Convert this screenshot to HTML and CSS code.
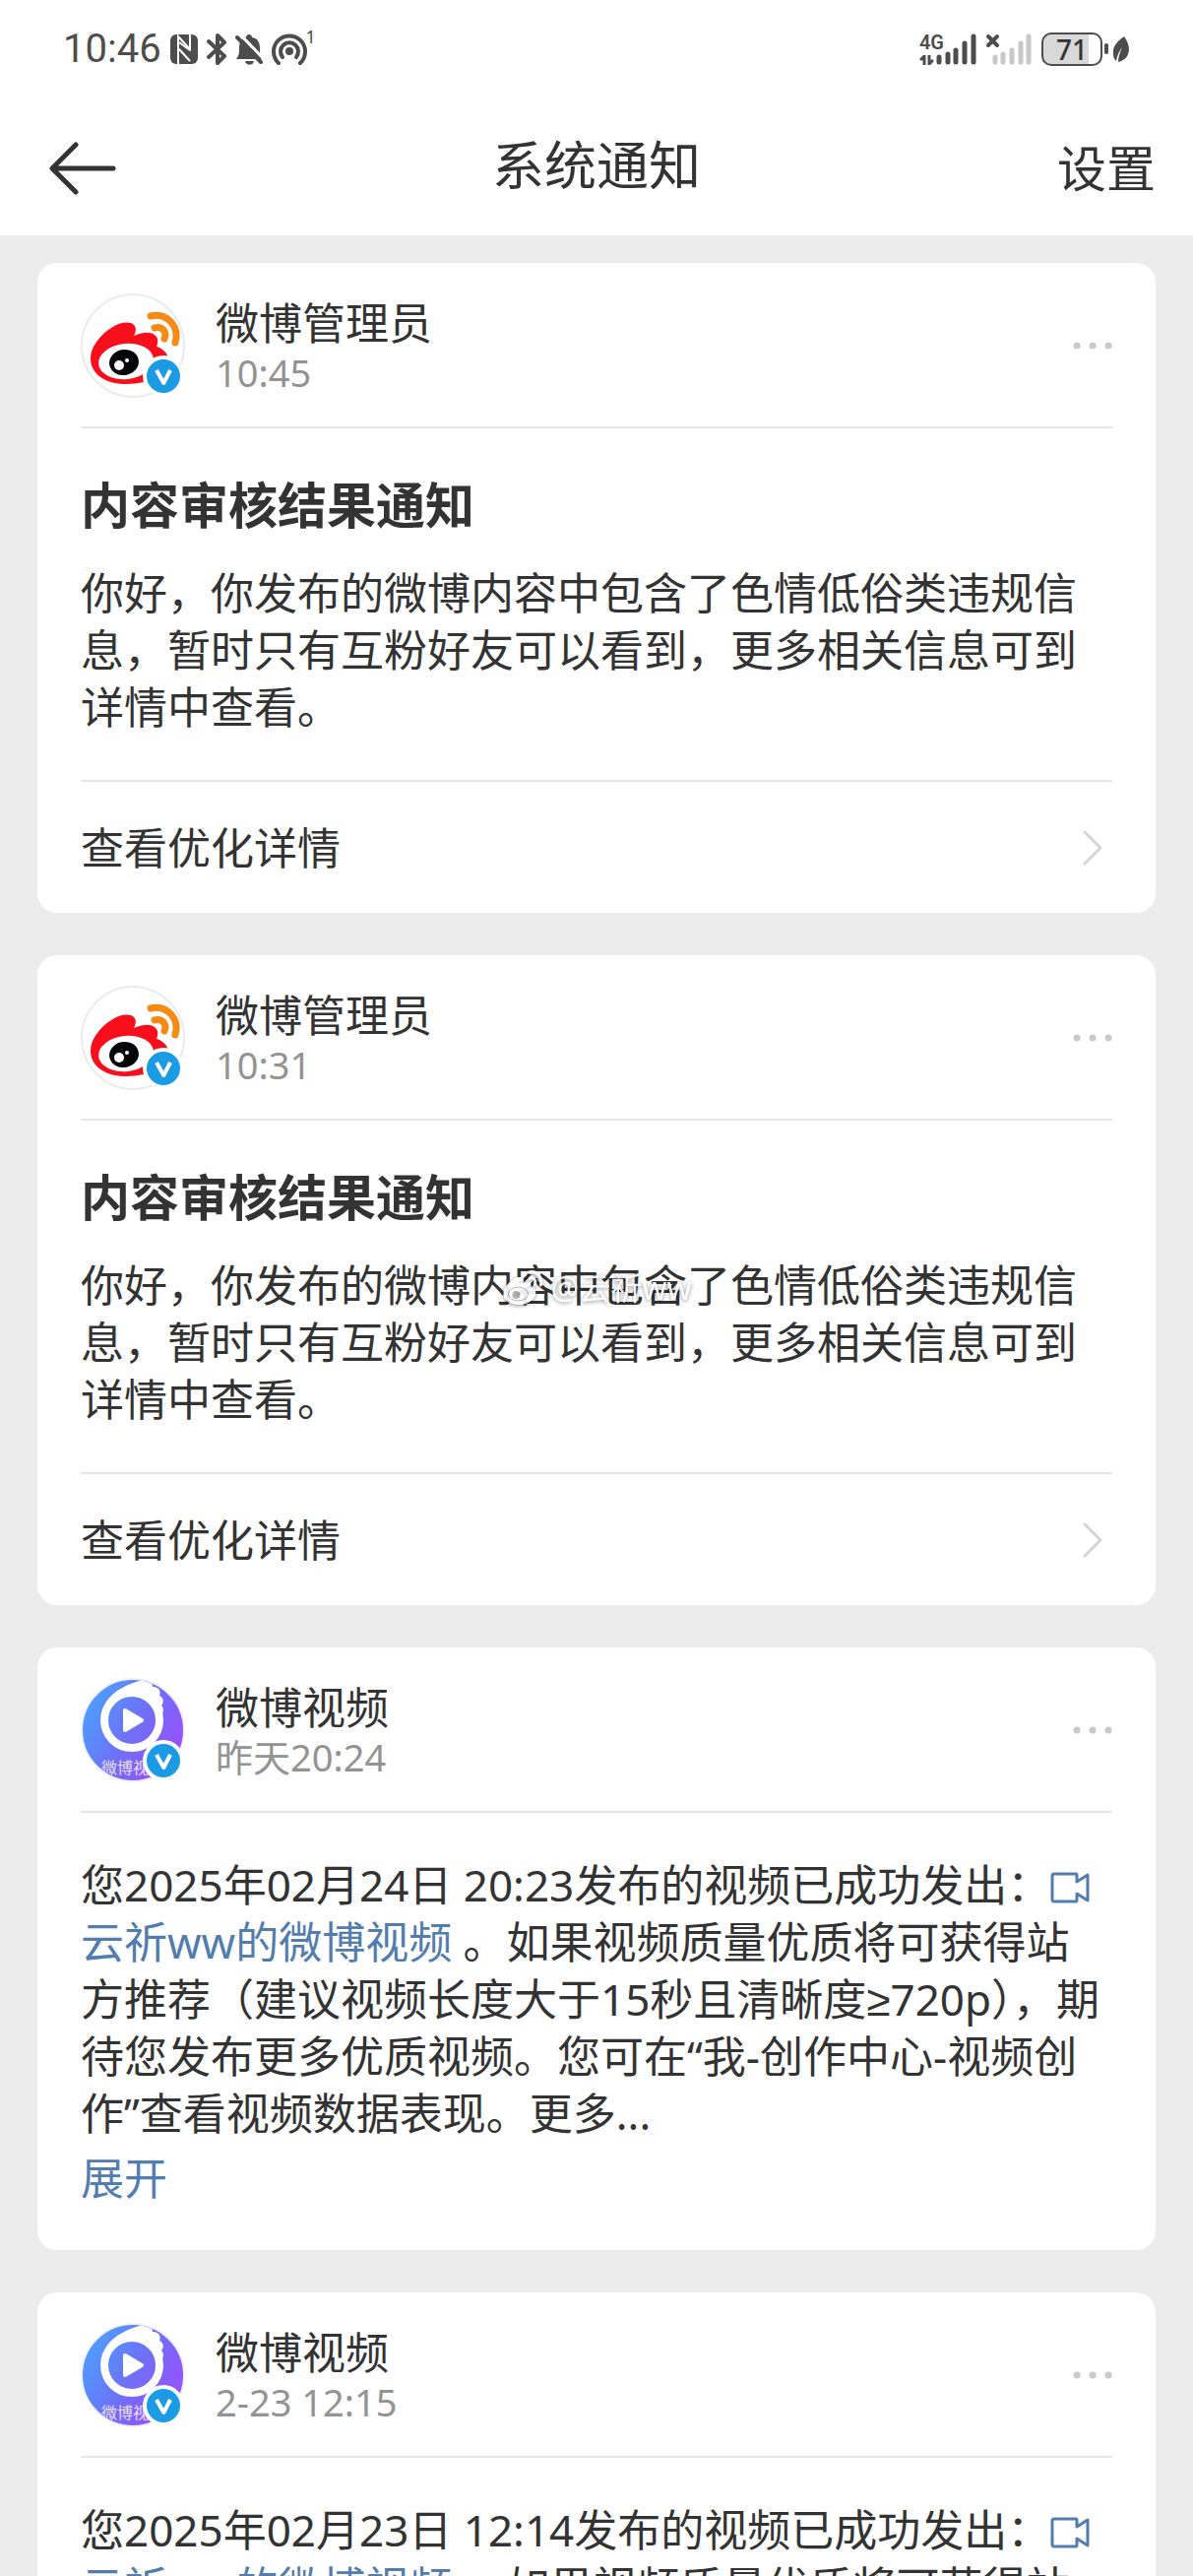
FILE: index.html
```
<!DOCTYPE html>
<html lang="zh-CN">

<head>
  <meta charset="UTF-8" />
  <meta name="viewport" content="width=device-width, initial-scale=1.0" />
  <title>系统通知</title>
  <link rel="stylesheet" href="styles.css">
</head>

<body>
  <!-- Shared icons -->
  <svg class="sprite" width="0" height="0" aria-hidden="true">
    <defs>
      <linearGradient id="video-bg" x1="0" y1="0.2" x2="1" y2="0.8">
        <stop offset="0" stop-color="#4aa3ff" />
        <stop offset="0.5" stop-color="#6f70f6" />
        <stop offset="1" stop-color="#9f4bff" />
      </linearGradient>
      <clipPath id="avatar-clip">
        <circle cx="53" cy="53" r="51" />
      </clipPath>
    </defs>

    <symbol id="badge" viewBox="0 0 42 42">
      <circle cx="21" cy="21" r="21" fill="#fff" />
      <circle cx="21" cy="21" r="17" fill="#1b9be3" />
      <path d="M14 15l7.3 13L28 15" fill="none" stroke="#fff" stroke-width="4" stroke-linejoin="round" />
    </symbol>

    <symbol id="admin" viewBox="0 0 106 106">
      <circle cx="53" cy="53" r="52" fill="#fff" stroke="#ebebeb" stroke-width="2" />
      <path d="M10 66C10 54 20 42 31 35C40 29 50 28 54 32C57 35 56 39 54 43C61 40 70 38 75 42C79 45 79 50 77 54C82 55 88 60 89 66C91 80 72 92 46 92C25 92 10 82 10 66Z" fill="#f90f1c" />
      <ellipse cx="46" cy="69" rx="28" ry="18" transform="rotate(-6 46 69)" fill="#fff" />
      <ellipse cx="44" cy="70" rx="15" ry="13" transform="rotate(-12 44 70)" fill="#050608" />
      <circle cx="39" cy="73" r="5" fill="#fff" />
      <circle cx="47" cy="68" r="2" fill="#fff" />
      <path d="M75 35C83 33 88 39 85 46M71 23C88 19 101 34 96 50" fill="none" stroke="#f78a12" stroke-width="7" stroke-linecap="round" />
    </symbol>

    <symbol id="video" viewBox="0 0 106 106">
      <circle cx="53" cy="53" r="52" fill="url(#video-bg)" stroke="#f1f1fb" stroke-width="2" />
      <g clip-path="url(#avatar-clip)">
        <path d="M26 24C34 12 50 5 64 2C69 1 73 4 73 9C79 9 82 13 80 18C84 20 85 24 82 28C85 31 84 35 82 38L70 22C60 12 42 13 31 27Z" fill="#fff" />
        <circle cx="52" cy="43" r="28" fill="none" stroke="#fff" stroke-width="8" />
        <path d="M45 33v20l17-10z" fill="#fff" stroke="#fff" stroke-width="4" stroke-linejoin="round" />
        <text x="21" y="97" class="avatar-text">微博视</text>
      </g>
    </symbol>

    <symbol id="more" viewBox="0 0 40 8">
      <circle cx="4" cy="4" r="3.5" />
      <circle cx="20" cy="4" r="3.5" />
      <circle cx="36" cy="4" r="3.5" />
    </symbol>

    <symbol id="camera" viewBox="0 0 40 32">
      <path d="M27 10V3q0-1-1-1H4q-2 0-2 2v24q0 2 2 2h22q1 0 1-1v-7l11 7V3z" fill="none" stroke="currentColor" stroke-width="3" stroke-linejoin="round" />
    </symbol>

    <symbol id="chevron" viewBox="0 0 20 36">
      <path d="M2 2l16 16L2 34" fill="none" stroke="#d4d4d4" stroke-width="3" stroke-linecap="round" stroke-linejoin="round" />
    </symbol>
  </svg>

  <!-- Phone status bar -->
  <div class="status-bar">
    <div class="status-left">
      <span class="clock">10:46</span>
      <svg width="28" height="30" viewBox="0 0 28 30">
        <rect width="28" height="30" rx="6" fill="#4d4d4d" />
        <path d="M8 30V2l12 13V0" fill="none" stroke="#fff" stroke-width="2" />
        <path d="M9 8l11 8M9 15l11 12" stroke="#fff" stroke-width="2" />
      </svg>
      <svg width="20" height="32" viewBox="0 0 20 32">
        <path d="M2 8l16 15-7 7V2l7 7L2 24" fill="none" stroke="#4d4d4d" stroke-width="4" stroke-linejoin="round" stroke-linecap="round" />
      </svg>
      <svg width="28" height="32" viewBox="0 0 28 32">
        <path d="M1 26c3-4 3-6 3-11C4 8 7 5 11 4c0-4 6-4 6 0 6 1 8 5 8 11 0 5 0 7 2 11z" fill="#4d4d4d" />
        <path d="M10 28h9c-1 5-8 5-9 0z" fill="#4d4d4d" />
        <path d="M4 0l25 26" stroke="#fff" stroke-width="3" />
        <path d="M2 4l24 25" stroke="#4d4d4d" stroke-width="4" stroke-linecap="round" />
      </svg>
      <svg width="36" height="32" viewBox="0 0 36 32">
        <g fill="none" stroke="#4d4d4d" stroke-width="4" stroke-linecap="round">
          <path d="M7 30a16 16 0 1 1 22 0" />
          <path d="M11 24a9 9 0 1 1 14 0" />
        </g>
        <circle cx="18" cy="18" r="4" fill="#4d4d4d" />
      </svg>
      <sup class="hotspot-count">1</sup>
    </div>
    <div class="status-right">
      <div class="network">
        <span>4G</span>
        <svg width="15" height="10" viewBox="0 0 15 10">
          <path d="M5 10V1L1 5M10 0v9l4-4" fill="none" stroke="#4d4d4d" stroke-width="3" />
        </svg>
      </div>
      <svg class="bars" width="42" height="32" viewBox="0 0 42 32">
        <path d="M3 24v5M12 21v8M20 17v12M29 10v19M38 3v26" stroke="#4d4d4d" stroke-width="5" stroke-linecap="round" />
      </svg>
      <svg class="no-sim" width="48" height="32" viewBox="0 0 48 32">
        <path d="M3 3l9 9M12 3l-9 9" stroke="#4d4d4d" stroke-width="4" stroke-linecap="round" />
        <path d="M10 24v5M18 21v8M27 17v12M36 10v19M44 3v26" stroke="#c8c8c8" stroke-width="5" stroke-linecap="round" />
      </svg>
      <div class="battery">71</div>
      <i class="battery-cap"></i>
      <svg width="18" height="28" viewBox="0 0 18 28">
        <path d="M12 1C5 6 0 11 1 19c0 3 1 5 3 7 1-6 3-10 6-14-2 5-4 9-4 15 11-2 15-14 6-26z" fill="#4d4d4d" />
      </svg>
    </div>
  </div>

  <header class="nav-bar">
    <button class="back-btn" aria-label="返回">
      <svg width="68" height="54" viewBox="0 0 68 54">
        <path d="M27 3L3 27l24 24M4 27h61" fill="none" stroke="#333" stroke-width="5" stroke-linecap="round" stroke-linejoin="round" />
      </svg>
    </button>
    <h1>系统通知</h1>
    <a href="#" class="settings">设置</a>
  </header>

  <main class="feed">
    <article class="card">
      <div class="card-header">
        <div class="avatar">
          <svg width="106" height="106"><use href="#admin" /></svg>
          <svg class="badge" width="42" height="42"><use href="#badge" /></svg>
        </div>
        <div class="sender">
          <p class="name">微博管理员</p>
          <p class="time">10:45</p>
        </div>
        <button class="more-btn" aria-label="更多">
          <svg width="40" height="8"><use href="#more" /></svg>
        </button>
      </div>
      <div class="card-body notice">
        <h2>内容审核结果通知</h2>
        <p>你好，你发布的微博内容中包含了色情低俗类违规信息，暂时只有互粉好友可以看到，更多相关信息可到详情中查看。</p>
      </div>
      <a href="#" class="card-link">
        查看优化详情
        <svg width="20" height="36"><use href="#chevron" /></svg>
      </a>
    </article>

    <article class="card">
      <div class="card-header">
        <div class="avatar">
          <svg width="106" height="106"><use href="#admin" /></svg>
          <svg class="badge" width="42" height="42"><use href="#badge" /></svg>
        </div>
        <div class="sender">
          <p class="name">微博管理员</p>
          <p class="time">10:31</p>
        </div>
        <button class="more-btn" aria-label="更多">
          <svg width="40" height="8"><use href="#more" /></svg>
        </button>
      </div>
      <div class="card-body notice">
        <h2>内容审核结果通知</h2>
        <p>你好，你发布的微博内容中包含了色情低俗类违规信息，暂时只有互粉好友可以看到，更多相关信息可到详情中查看。</p>
      </div>
      <a href="#" class="card-link">
        查看优化详情
        <svg width="20" height="36"><use href="#chevron" /></svg>
      </a>
    </article>

    <article class="card">
      <div class="card-header">
        <div class="avatar">
          <svg width="106" height="106"><use href="#video" /></svg>
          <svg class="badge" width="42" height="42"><use href="#badge" /></svg>
        </div>
        <div class="sender">
          <p class="name">微博视频</p>
          <p class="time">昨天20:24</p>
        </div>
        <button class="more-btn" aria-label="更多">
          <svg width="40" height="8"><use href="#more" /></svg>
        </button>
      </div>
      <div class="card-body">
        <p>您2025年02月24日 20:23发布的视频已成功发出：<a href="#"><svg class="camera" width="40" height="32"><use href="#camera" /></svg> 云祈ww的微博视频</a> 。如果视频质量优质将可获得站方推荐（建议视频长度大于15秒且清晰度≥720p），期待您发布更多优质视频。您可在“我-创作中心-视频创作”查看视频数据表现。更多...</p>
        <button class="expand-btn">展开</button>
      </div>
    </article>

    <article class="card">
      <div class="card-header">
        <div class="avatar">
          <svg width="106" height="106"><use href="#video" /></svg>
          <svg class="badge" width="42" height="42"><use href="#badge" /></svg>
        </div>
        <div class="sender">
          <p class="name">微博视频</p>
          <p class="time">2-23 12:15</p>
        </div>
        <button class="more-btn" aria-label="更多">
          <svg width="40" height="8"><use href="#more" /></svg>
        </button>
      </div>
      <div class="card-body">
        <p>您2025年02月23日 12:14发布的视频已成功发出：<a href="#"><svg class="camera" width="40" height="32"><use href="#camera" /></svg> 云祈ww的微博视频</a> 。如果视频质量优质将可获得站</p>
      </div>
    </article>
  </main>

  <!-- Watermark over the page -->
  <div class="watermark">
    <svg width="44" height="38" viewBox="0 0 44 38">
      <path d="M2 25C2 17 12 8 19 8c4 0 4 3 3 6 5-2 9-1 8 4 11 4 2 18-12 18C9 36 2 32 2 25z" fill="#fff" />
      <ellipse cx="17" cy="25" rx="10" ry="7" fill="none" stroke="#aaa" stroke-width="1" />
      <circle cx="15" cy="26" r="4" fill="#aaa" />
      <path d="M29 9c4-1 6 2 5 6M28 3c8-2 14 5 12 13" fill="none" stroke="#fff" stroke-width="3" stroke-linecap="round" />
    </svg>
    <span>@云祈ww</span>
  </div>
</body>

</html>
```
FILE: styles.css
```
*,
*::after,
*::before {
  margin: 0;
  padding: 0;
  box-sizing: border-box;
}

body {
  height: 100vh;
  display: flex;
  flex-direction: column;
  overflow: hidden;
  background-color: #ececec;
  color: #333;
  font-family: "Noto Sans", "Liberation Sans", "Noto Sans CJK SC", sans-serif;
  font-size: 44px;
  line-height: 58px;
}

a {
  color: #527dad;
  text-decoration: none;
}

button {
  border: none;
  background: none;
  font: inherit;
  color: inherit;
  cursor: pointer;
}

svg {
  display: block;
  flex-shrink: 0;
}

.sprite {
  position: absolute;
}

/* Status bar */
.status-bar {
  flex-shrink: 0;
  height: 99px;
  padding: 0 64px;
  display: flex;
  align-items: center;
  justify-content: space-between;
  background-color: #fff;
  color: #4d4d4d;
}

.status-left,
.status-right {
  display: flex;
  align-items: center;
}

.status-left {
  gap: 9px;
}

.clock {
  font-family: Roboto, sans-serif;
  font-size: 40px;
  line-height: 40px;
}

.hotspot-count {
  margin-left: -10px;
  align-self: flex-start;
  font-size: 18px;
  line-height: 14px;
}

.network {
  display: flex;
  flex-direction: column;
  gap: 4px;
  font-family: Roboto, sans-serif;
  font-size: 20px;
  font-weight: 600;
  line-height: 18px;
}

.bars {
  margin-left: -8px;
}

.no-sim {
  margin-left: 8px;
}

.battery {
  width: 62px;
  height: 34px;
  margin-left: 9px;
  border: 2px solid #4d4d4d;
  border-radius: 10px;
  background: linear-gradient(to right, #d8d8d8 80%, #fff 80%);
  color: #333;
  font-size: 28px;
  font-weight: 500;
  line-height: 30px;
  text-align: center;
}

.battery-cap {
  width: 4px;
  height: 11px;
  margin: 0 4px 0 2px;
  border-radius: 2px;
  background-color: #4d4d4d;
}

/* Title bar */
.nav-bar {
  flex-shrink: 0;
  height: 140px;
  padding: 4px 38px 0;
  display: grid;
  grid-template-columns: 1fr auto 1fr;
  align-items: center;
  background-color: #fff;
}

.nav-bar h1 {
  padding-bottom: 6px;
  font-size: 53px;
  font-weight: 400;
}

.back-btn {
  justify-self: start;
  padding-left: 12px;
}

.settings {
  justify-self: end;
  color: #333;
  font-size: 50px;
}

/* Cards */
.feed {
  flex: 1;
  min-height: 0;
  padding: 28px 38px 0;
  display: flex;
  flex-direction: column;
  gap: 43px;
  overflow-y: auto;
  scrollbar-width: none;
}

.card {
  flex-shrink: 0;
  padding: 0 44px;
  border-radius: 20px;
  background-color: #fff;
}

.card-header {
  padding: 31px 0 29px;
  display: flex;
  align-items: center;
  gap: 31px;
  border-bottom: 2px solid #e6e6e6;
}

.avatar {
  position: relative;
}

.badge {
  position: absolute;
  right: 1px;
  bottom: 1px;
}

.sender {
  flex: 1;
}

.name {
  line-height: 54px;
}

.time {
  color: #939393;
  font-size: 38px;
  line-height: 46px;
}

.more-btn {
  fill: #c9c9c9;
}

.card-body {
  padding: 44px 12px 44px 0;
}

.card-body h2 {
  margin-bottom: 24px;
  font-size: 50px;
  font-weight: 700;
  line-height: 72px;
}

.card-body.notice {
  padding: 42px 0 45px;
}

.camera {
  display: inline-block;
  vertical-align: -2px;
}

.expand-btn {
  display: block;
  margin-top: 8px;
  color: #527dad;
}

.card-link {
  height: 135px;
  padding-right: 10px;
  display: flex;
  align-items: center;
  justify-content: space-between;
  border-top: 2px solid #e6e6e6;
  color: #333;
}

.avatar-text {
  fill: #eadfff;
  font-size: 16px;
}

.watermark {
  position: fixed;
  top: 50%;
  left: 50%;
  transform: translate(-50%, -50%);
  display: flex;
  align-items: center;
  gap: 6px;
  color: #fff;
  font-size: 32px;
  line-height: 40px;
  opacity: 0.9;
  filter: drop-shadow(0 1px 2px rgba(0, 0, 0, 0.5));
}
```
